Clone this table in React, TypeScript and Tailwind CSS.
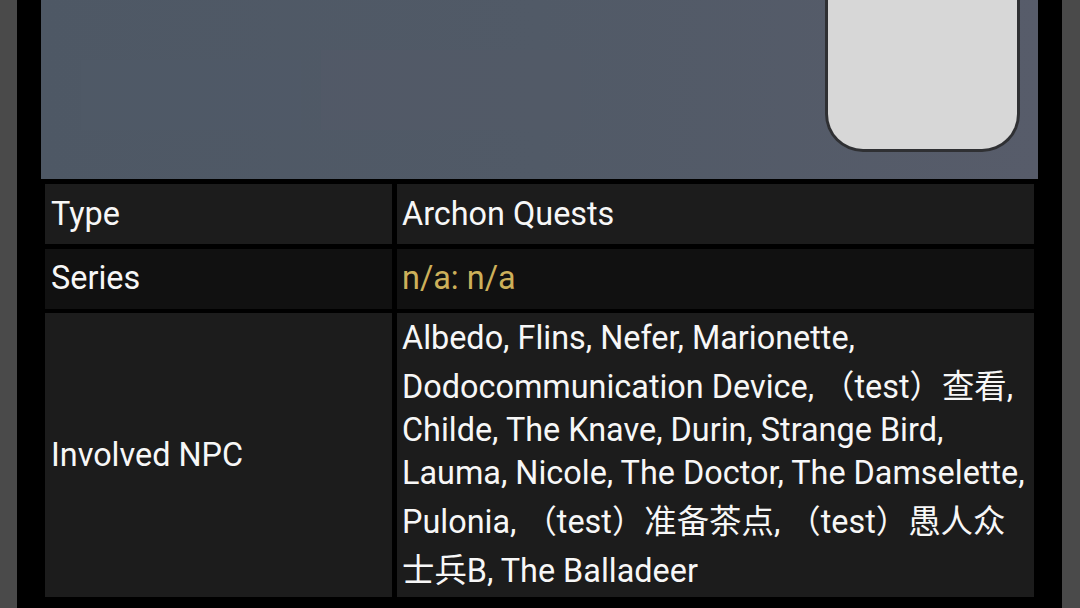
import React from "react";

function C({ children }: { children: React.ReactNode }) {
  return (
    <span className="font-['Noto_Sans_CJK_SC',sans-serif] leading-normal">{children}</span>
  );
}

export default function App() {
  const cell = "flex items-center min-h-[60px] py-[4px]";
  return (
    <div className="h-[608px] w-[1080px] overflow-hidden bg-[#4a4a4a] font-['Roboto',sans-serif] text-[32.4px] leading-[43px] text-[#f7f7f7]">
      <div className="ml-[17px] mr-[18px] h-full bg-black px-[24px]">
        {/* screenshot image */}
        <div className="relative flex h-[179px] items-end justify-end overflow-hidden bg-gradient-to-r from-[#4e5865] via-[#515a67] to-[#575c6a] pb-[27px] pr-[18px]">
          <div className="absolute left-[40px] top-[60px] h-[70px] w-[220px] bg-[#505a67] opacity-60" />
          <div className="absolute left-[280px] top-[50px] h-[80px] w-[260px] bg-[#535a68] opacity-70" />
          <div className="relative h-[200px] w-[195px] rounded-b-[38px] border-[3px] border-t-0 border-[#2f3033] bg-[#d7d7d7]" />
        </div>
        {/* table */}
        <div className="grid grid-cols-[347px_637px] gap-x-[5px] gap-y-[4.5px] px-[4px] pt-[5px]">
          <div className={`${cell} bg-[#1c1c1c] px-[6px]`}>Type</div>
          <div className={`${cell} bg-[#1c1c1c] px-[5px]`}>Archon Quests</div>

          <div className={`${cell} bg-[#111111] px-[6px]`}>Series</div>
          <div className={`${cell} bg-[#111111] px-[5px] text-[#cdb05a]`}>n/a: n/a</div>

          <div className={`${cell} bg-[#1c1c1c] px-[6px]`}>Involved NPC</div>
          <div className={`${cell} bg-[#1c1c1c] px-[5px]`}>
            <div>
              Albedo, Flins, Nefer, Marionette, Dodocommunication Device, <C>（</C>test<C>）查看</C>, Childe, The Knave, Durin, Strange Bird, Lauma, Nicole, The Doctor, The Damselette, Pulonia, <C>（</C>test<C>）准备茶点</C>, <C>（</C>test<C>）愚人众士兵</C>B, The Balladeer
            </div>
          </div>
        </div>
      </div>
    </div>
  );
}
